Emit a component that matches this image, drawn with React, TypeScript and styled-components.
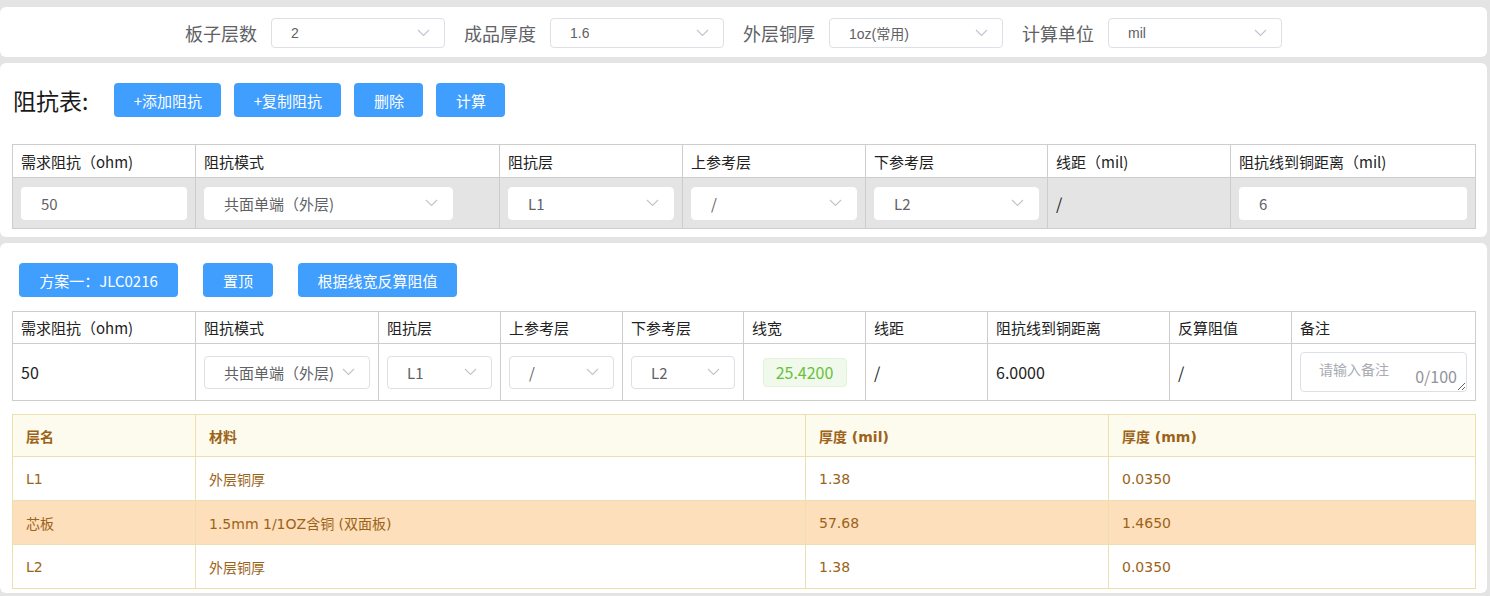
import React from 'react'
import styled, { createGlobalStyle } from 'styled-components'

const GlobalStyle = createGlobalStyle`
  body {
    margin: 0;
    background: #e4e4e4;
    font-family: "Noto Sans CJK SC", "Liberation Sans", sans-serif;
  }
`

const cn = `"Noto Sans CJK SC", "Liberation Sans", sans-serif`

const Chevron = () => (
  <svg width="13" height="8" viewBox="0 0 13 8" fill="none">
    <path d="M1 1l5.5 5.5L12 1" stroke="#c0c4cc" strokeWidth="1.1" />
  </svg>
)

interface SelectProps {
  value: string
  width?: number
  bordered?: boolean
  latin?: boolean
}

const Select = ({ value, width, bordered, latin }: SelectProps) => (
  <SelectBox $width={width} $bordered={bordered}>
    <SelectText $latin={latin}>{value}</SelectText>
    <Chevron />
  </SelectBox>
)

const filters = [
  { label: '板子层数', value: '2' },
  { label: '成品厚度', value: '1.6' },
  { label: '外层铜厚', value: '1oz(常用)' },
  { label: '计算单位', value: 'mil' },
]

const reqCols = [183, 304, 183, 183, 182, 183, 245]
const reqHeads = ['需求阻抗（ohm)', '阻抗模式', '阻抗层', '上参考层', '下参考层', '线距（mil)', '阻抗线到铜距离（mil)']

const planCols = [183, 183, 122, 122, 121, 122, 122, 182, 122, 184]
const planHeads = ['需求阻抗（ohm)', '阻抗模式', '阻抗层', '上参考层', '下参考层', '线宽', '线距', '阻抗线到铜距离', '反算阻值', '备注']

const stackCols = [183, 610, 303, 367]
const stack = [
  { name: 'L1', mat: '外层铜厚', mil: '1.38', mm: '0.0350', core: false },
  { name: '芯板', mat: '1.5mm 1/1OZ含铜 (双面板)', mil: '57.68', mm: '1.4650', core: true },
  { name: 'L2', mat: '外层铜厚', mil: '1.38', mm: '0.0350', core: false },
]

const App = () => {
  return (
    <Page>
      <GlobalStyle />
      <FilterCard>
        {filters.map(f => (
          <FilterItem key={f.label}>
            <FilterLabel>{f.label}</FilterLabel>
            <Select value={f.value} width={174} bordered latin />
          </FilterItem>
        ))}
      </FilterCard>

      <Card $pb={8}>
        <Toolbar>
          <Title>阻抗表:</Title>
          <Button $w={107}>+添加阻抗</Button>
          <Button $w={107}>+复制阻抗</Button>
          <Button $w={69}>删除</Button>
          <Button $w={69}>计算</Button>
        </Toolbar>
        <Table>
          <colgroup>
            {reqCols.map((w, i) => <col key={i} style={{ width: w }} />)}
          </colgroup>
          <thead>
            <tr>{reqHeads.map(h => <HeadCell key={h} $h={32}>{h}</HeadCell>)}</tr>
          </thead>
          <tbody>
            <GrayRow>
              <Cell><Input>50</Input></Cell>
              <Cell><Select value="共面单端（外层)" width={249} /></Cell>
              <Cell><Select value="L1" /></Cell>
              <Cell><Select value="/" /></Cell>
              <Cell><Select value="L2" /></Cell>
              <Cell><PlainValue>/</PlainValue></Cell>
              <Cell><Input>6</Input></Cell>
            </GrayRow>
          </tbody>
        </Table>
      </Card>

      <Card $pb={4}>
        <PlanBar>
          <Button $w={159}>方案一：JLC0216</Button>
          <Button $w={70}>置顶</Button>
          <Button $w={159}>根据线宽反算阻值</Button>
        </PlanBar>
        <Table>
          <colgroup>
            {planCols.map((w, i) => <col key={i} style={{ width: w }} />)}
          </colgroup>
          <thead>
            <tr>{planHeads.map(h => <HeadCell key={h} $h={31}>{h}</HeadCell>)}</tr>
          </thead>
          <tbody>
            <PlanRow>
              <Cell><PlainValue>50</PlainValue></Cell>
              <Cell><Select value="共面单端（外层)" bordered /></Cell>
              <Cell><Select value="L1" bordered /></Cell>
              <Cell><Select value="/" bordered /></Cell>
              <Cell><Select value="L2" bordered /></Cell>
              <Cell><TagWrap><Tag>25.4200</Tag></TagWrap></Cell>
              <Cell><PlainValue>/</PlainValue></Cell>
              <Cell><PlainValue>6.0000</PlainValue></Cell>
              <Cell><PlainValue>/</PlainValue></Cell>
              <Cell>
                <NoteBox>
                  <NoteArea placeholder="请输入备注" />
                  <NoteCount>0/100</NoteCount>
                </NoteBox>
              </Cell>
            </PlanRow>
          </tbody>
        </Table>

        <StackTable>
          <colgroup>
            {stackCols.map((w, i) => <col key={i} style={{ width: w }} />)}
          </colgroup>
          <thead>
            <tr>
              <StackHead>层名</StackHead>
              <StackHead>材料</StackHead>
              <StackHead>厚度 (mil)</StackHead>
              <StackHead>厚度 (mm)</StackHead>
            </tr>
          </thead>
          <tbody>
            {stack.map(r => (
              <StackRow key={r.name} $core={r.core}>
                <StackCell>{r.name}</StackCell>
                <StackCell>{r.mat}</StackCell>
                <StackCell>{r.mil}</StackCell>
                <StackCell>{r.mm}</StackCell>
              </StackRow>
            ))}
          </tbody>
        </StackTable>
      </Card>
    </Page>
  )
}

export default App

const Page = styled.div`
  padding: 7px 3px 0 0;
  display: flex;
  flex-direction: column;
  gap: 6px;
`

const FilterCard = styled.div`
  background: #fff;
  border-radius: 6px;
  height: 50px;
  display: flex;
  align-items: center;
  justify-content: center;
  gap: 19px;
  padding: 2px 20px 0 0;
  box-sizing: border-box;
`

const FilterItem = styled.div`
  display: flex;
  align-items: center;
  gap: 14px;
`

const FilterLabel = styled.span`
  font-family: ${cn};
  font-size: 18px;
  color: #606266;
`

const SelectBox = styled.div<{ $width?: number; $bordered?: boolean }>`
  width: ${p => (p.$width ? `${p.$width}px` : '100%')};
  height: ${p => (p.$bordered ? 30 : 33)}px;
  box-sizing: border-box;
  background: #fff;
  border: 1px solid ${p => (p.$bordered ? '#dcdfe6' : '#fff')};
  border-radius: 4px;
  display: flex;
  align-items: center;
  padding: 0 14px 0 19px;
  gap: 6px;
  overflow: hidden;

  svg {
    flex-shrink: 0;
    margin-left: auto;
  }

  td & {
    height: 33px;
  }
`

const SelectText = styled.span<{ $latin?: boolean }>`
  font-family: ${p => (p.$latin ? `"Liberation Sans", "Noto Sans CJK SC", sans-serif` : cn)};
  font-size: ${p => (p.$latin ? 14 : 15)}px;
  color: #606266;
  white-space: nowrap;
  overflow: hidden;
  min-width: 0;
`

const Card = styled.div<{ $pb: number }>`
  background: #fff;
  border-radius: 6px;
  padding: 20px 12px ${p => p.$pb}px 12px;
  display: flex;
  flex-direction: column;
`

const Toolbar = styled.div`
  display: flex;
  align-items: center;
  gap: 13px;
  height: 34px;
  margin-bottom: 27px;
`

const Title = styled.h2`
  margin: 0 13px 0 1px;
  font-family: ${cn};
  font-size: 23px;
  font-weight: 400;
  color: #1a1a1a;
`

const Button = styled.button<{ $w: number }>`
  width: ${p => p.$w}px;
  height: 34px;
  border: none;
  border-radius: 4px;
  background: #409eff;
  color: #fff;
  font-family: ${cn};
  font-size: 15px;
  padding: 0;
  cursor: pointer;
`

const PlanBar = styled.div`
  display: flex;
  gap: 25px;
  padding-left: 7px;
  margin-bottom: 14px;
`

const Table = styled.table`
  width: 1463px;
  table-layout: fixed;
  border-collapse: collapse;
  font-family: ${cn};
`

const HeadCell = styled.th<{ $h: number }>`
  height: ${p => p.$h}px;
  border: 1px solid #cdcdcd;
  padding: 0 8px;
  text-align: left;
  font-weight: 400;
  font-size: 15px;
  color: #222;
  background: #fff;
  white-space: nowrap;
`

const GrayRow = styled.tr`
  background: #e4e4e4;
  height: 51px;
`

const PlanRow = styled.tr`
  background: #fff;
  height: 57px;
`

const Cell = styled.td`
  border: 1px solid #cdcdcd;
  padding: 0 8px;
  vertical-align: middle;
`

const Input = styled.div`
  height: 33px;
  background: #fff;
  border-radius: 4px;
  display: flex;
  align-items: center;
  padding-left: 20px;
  font-size: 15px;
  color: #606266;
`

const PlainValue = styled.span`
  font-size: 16px;
  color: #222;
`

const TagWrap = styled.div`
  display: flex;
  justify-content: center;
`

const Tag = styled.span`
  display: inline-flex;
  align-items: center;
  justify-content: center;
  width: 84px;
  height: 29px;
  box-sizing: border-box;
  background: #f0f9eb;
  border: 1px solid #e1f3d8;
  border-radius: 4px;
  color: #67c23a;
  font-size: 16px;
`

const NoteBox = styled.div`
  position: relative;
  height: 40px;
`

const NoteArea = styled.textarea`
  width: 100%;
  height: 40px;
  box-sizing: border-box;
  border: 1px solid #dcdfe6;
  border-radius: 4px;
  padding: 6px 18px;
  font-family: ${cn};
  font-size: 14px;
  color: #606266;
  resize: both;
  outline: none;

  &::placeholder {
    color: #a8abb2;
  }
`

const NoteCount = styled.span`
  position: absolute;
  right: 10px;
  bottom: 4px;
  font-size: 16px;
  color: #909399;
`

const StackTable = styled.table`
  width: 1463px;
  margin-top: 13px;
  table-layout: fixed;
  border-collapse: collapse;
  font-family: "DejaVu Sans", "Noto Sans CJK SC", sans-serif;
  color: #9c6318;
`

const StackHead = styled.th`
  height: 41px;
  background: #fdfbee;
  border: 1px solid #eedfae;
  padding: 0 13px;
  text-align: left;
  font-size: 14px;
  font-weight: 700;
`

const StackRow = styled.tr<{ $core: boolean }>`
  background: ${p => (p.$core ? '#fddfbc' : '#fff')};
  height: 44px;
`

const StackCell = styled.td`
  border: 1px solid #eedfae;
  padding: 0 13px;
  font-size: 14px;
`
